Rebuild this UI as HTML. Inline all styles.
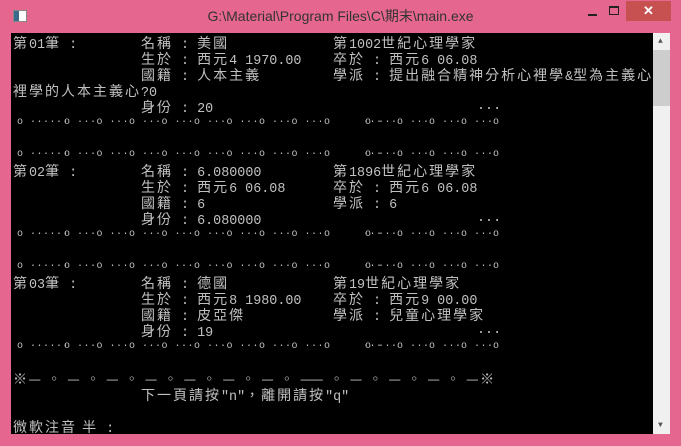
<!DOCTYPE html>
<html><head><meta charset="utf-8"><style>
body{margin:0;width:681px;height:446px;background:#e5668f;position:relative;overflow:hidden;font-family:"Liberation Mono","Noto Sans CJK TC",monospace}
.title{position:absolute;left:0;top:0;width:681px;height:32px;text-align:center;line-height:32px;font-family:"Liberation Sans","Noto Sans CJK TC",sans-serif;font-size:14px;color:#333}
.con{position:absolute;left:11px;top:33px;width:642px;height:401px;background:#000;overflow:hidden}
.sb{position:absolute;left:653px;top:33px;width:17px;height:401px;background:#f0f0f0}
.r{position:absolute;left:0;height:16px;white-space:pre;color:#c0c0c0;font-size:13.4px;line-height:16px}
.s{position:absolute;top:0}
.c{font-family:"Noto Sans CJK TC",sans-serif;font-size:14px;letter-spacing:2px}
.d{position:absolute;left:6px;color:#c0c0c0;font-size:10px;line-height:16px;white-space:pre;letter-spacing:0.5px}
.d span{display:inline-block;width:32.5px}
.d span.f{width:47px}
.d span.g{width:41px}
.d span.h{width:32px}
</style></head><body>
<div class="title">G:\Material\Program Files\C\期末\main.exe</div>
<div style="position:absolute;left:13px;top:10px;width:12px;height:10px;border:1px solid #888;background:#fff"><div style="width:5px;height:10px;background:#3a6b8a"></div></div>
<div style="position:absolute;left:588px;top:14px;width:9px;height:2px;background:#222"></div>
<div style="position:absolute;left:609px;top:6px;width:8px;height:6px;border:1px solid #222;border-top-width:2px"></div>
<div style="position:absolute;left:626px;top:1px;width:45px;height:20px;background:#c75050;color:#fff;text-align:center;font:bold 13px/20px 'Liberation Sans',sans-serif">✕</div>
<div class="con">
<div class="r" style="top:2px"><span class="s" style="left:2px"><span class="c">第</span>01<span class="c">筆</span> :</span><span class="s" style="left:130px"><span class="c">名稱</span> : <span class="c">美國</span></span><span class="s" style="left:322px"><span class="c">第</span>1002<span class="c">世紀心理學家</span></span></div>
<div class="r" style="top:18px"><span class="s" style="left:130px"><span class="c">生於</span> : <span class="c">西元</span>4 1970.00</span><span class="s" style="left:322px"><span class="c">卒於</span> : <span class="c">西元</span>6 06.08</span></div>
<div class="r" style="top:34px"><span class="s" style="left:130px"><span class="c">國籍</span> : <span class="c">人本主義</span></span><span class="s" style="left:322px"><span class="c">學派</span> : <span class="c">提出融合精神分析心裡學</span>&amp;<span class="c">型為主義心</span></span></div>
<div class="r" style="top:50px"><span class="s" style="left:2px"><span class="c">裡學的人本主義心</span>?0</span></div>
<div class="r" style="top:66px"><span class="s" style="left:130px"><span class="c">身份</span> : 20</span><span class="s" style="left:466px">...</span></div>
<div class="d" style="top:82px"><span class="f">o ······</span><span>o ···</span><span>o ···</span><span>o ···</span><span>o ···</span><span>o ···</span><span>o ···</span><span>o ···</span><span>o ···</span><span class="g">o     ···</span><span class="h">o ···</span><span class="h">o ···</span><span class="h">o ···</span><span class="h">o ···</span><span>o</span></div>
<div class="d" style="top:114px"><span class="f">o ······</span><span>o ···</span><span>o ···</span><span>o ···</span><span>o ···</span><span>o ···</span><span>o ···</span><span>o ···</span><span>o ···</span><span class="g">o     ···</span><span class="h">o ···</span><span class="h">o ···</span><span class="h">o ···</span><span class="h">o ···</span><span>o</span></div>
<div class="r" style="top:130px"><span class="s" style="left:2px"><span class="c">第</span>02<span class="c">筆</span> :</span><span class="s" style="left:130px"><span class="c">名稱</span> : 6.080000</span><span class="s" style="left:322px"><span class="c">第</span>1896<span class="c">世紀心理學家</span></span></div>
<div class="r" style="top:146px"><span class="s" style="left:130px"><span class="c">生於</span> : <span class="c">西元</span>6 06.08</span><span class="s" style="left:322px"><span class="c">卒於</span> : <span class="c">西元</span>6 06.08</span></div>
<div class="r" style="top:162px"><span class="s" style="left:130px"><span class="c">國籍</span> : 6</span><span class="s" style="left:322px"><span class="c">學派</span> : 6</span></div>
<div class="r" style="top:178px"><span class="s" style="left:130px"><span class="c">身份</span> : 6.080000</span><span class="s" style="left:466px">...</span></div>
<div class="d" style="top:194px"><span class="f">o ······</span><span>o ···</span><span>o ···</span><span>o ···</span><span>o ···</span><span>o ···</span><span>o ···</span><span>o ···</span><span>o ···</span><span class="g">o     ···</span><span class="h">o ···</span><span class="h">o ···</span><span class="h">o ···</span><span class="h">o ···</span><span>o</span></div>
<div class="d" style="top:226px"><span class="f">o ······</span><span>o ···</span><span>o ···</span><span>o ···</span><span>o ···</span><span>o ···</span><span>o ···</span><span>o ···</span><span>o ···</span><span class="g">o     ···</span><span class="h">o ···</span><span class="h">o ···</span><span class="h">o ···</span><span class="h">o ···</span><span>o</span></div>
<div class="r" style="top:242px"><span class="s" style="left:2px"><span class="c">第</span>03<span class="c">筆</span> :</span><span class="s" style="left:130px"><span class="c">名稱</span> : <span class="c">德國</span></span><span class="s" style="left:322px"><span class="c">第</span>19<span class="c">世紀心理學家</span></span></div>
<div class="r" style="top:258px"><span class="s" style="left:130px"><span class="c">生於</span> : <span class="c">西元</span>8 1980.00</span><span class="s" style="left:322px"><span class="c">卒於</span> : <span class="c">西元</span>9 00.00</span></div>
<div class="r" style="top:274px"><span class="s" style="left:130px"><span class="c">國籍</span> : <span class="c">皮亞傑</span></span><span class="s" style="left:322px"><span class="c">學派</span> : <span class="c">兒童心理學家</span></span></div>
<div class="r" style="top:290px"><span class="s" style="left:130px"><span class="c">身份</span> : 19</span><span class="s" style="left:466px">...</span></div>
<div class="d" style="top:306px"><span class="f">o ······</span><span>o ···</span><span>o ···</span><span>o ···</span><span>o ···</span><span>o ···</span><span>o ···</span><span>o ···</span><span>o ···</span><span class="g">o     ···</span><span class="h">o ···</span><span class="h">o ···</span><span class="h">o ···</span><span class="h">o ···</span><span>o</span></div>
<div class="r" style="top:338px"><span class="s c" style="left:2px;letter-spacing:1.5px;font-size:14px">※— ◦ — ◦ — ◦ — ◦ — ◦ — ◦ — ◦ —— ◦ — ◦ — ◦ — ◦ —※</span></div>
<div class="r" style="top:354px"><span class="s" style="left:130px"><span class="c">下一頁請按</span>"n"<span class="c">，離開請按</span>"q"</span></div>
<div class="r" style="top:386px"><span class="s" style="left:2px"><span class="c">微軟注音 半</span> :</span></div>
</div>
<div class="sb"><div style="position:absolute;left:0;top:17px;width:17px;height:56px;background:#cdcdcd"></div>
<div style="position:absolute;left:5px;top:4px;font-size:8px;color:#555">▲</div>
<div style="position:absolute;left:5px;top:388px;font-size:8px;color:#555">▼</div></div>
</body></html>
